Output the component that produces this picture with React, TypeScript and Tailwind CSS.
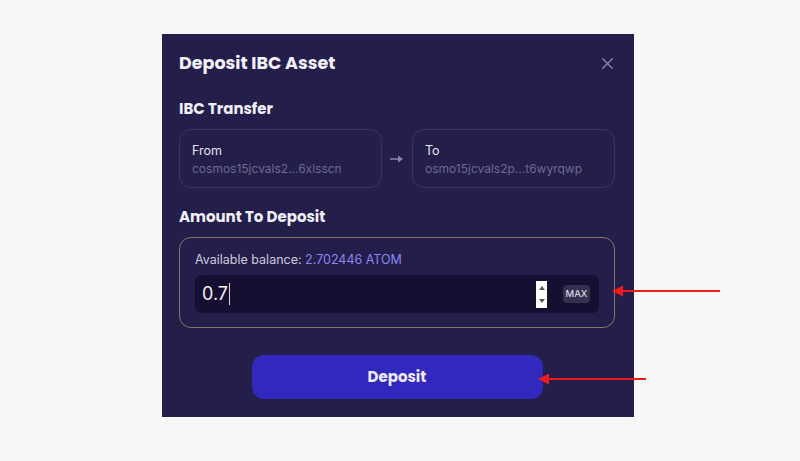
import { X } from 'lucide-react'

function AddressCard({ label, address }: { label: string; address: string }) {
  return (
    <div className="flex h-[59px] w-[203px] flex-col rounded-[12px] border border-[#39335f] pl-[12px] pt-[12px]">
      <span className="text-[12.5px] leading-[18px] text-[#e6e4f0]">{label}</span>
      <span className="text-[12px] leading-[18px] text-[#6f6a91]">{address}</span>
    </div>
  )
}

function RedArrow({ width }: { width: number }) {
  return (
    <svg width={width} height="14" viewBox={`0 0 ${width} 14`} aria-hidden="true">
      <line x1="10" y1="7" x2={width} y2="7" stroke="#f01c1c" strokeWidth="2" />
      <polygon points="0,7 11,1.5 11,12.5" fill="#f01c1c" />
    </svg>
  )
}

export default function App() {
  return (
    <div
      className="relative h-[461px] w-[800px] bg-[#f6f7f9] pl-[162px] pt-[34px]"
      style={{ fontFamily: 'Inter, "Noto Sans", sans-serif' }}
    >
      <div className="flex h-[383px] w-[472px] flex-col bg-[#231e4a] pl-[17px] pr-[19px] pt-[15px]">
        {/* Header */}
        <div className="flex h-[28px] items-center justify-between">
          <h2
            className="text-[17.5px] font-bold leading-[28px] text-[#f1f0f6]"
            style={{ fontFamily: 'Poppins, Lato, Inter, sans-serif' }}
          >
            Deposit IBC Asset
          </h2>
          <X className="-mr-[2px] h-[19px] w-[19px] text-[#8f8aab]" strokeWidth={1.5} />
        </div>

        <h3
          className="mt-[20px] text-[15px] font-bold leading-[24px] text-[#efeef5]"
          style={{ fontFamily: 'Poppins, Lato, Inter, sans-serif' }}
        >
          IBC Transfer
        </h3>

        <div className="mt-[8px] flex items-center justify-between">
          <AddressCard label="From" address="cosmos15jcvals2...6xlsscn" />
          <svg width="14" height="10" viewBox="0 0 14 10" aria-hidden="true">
            <line x1="0" y1="5" x2="9" y2="5" stroke="#8c84b4" strokeWidth="1.5" />
            <polygon points="8,1.5 13,5 8,8.5" fill="#8c84b4" />
          </svg>
          <AddressCard label="To" address="osmo15jcvals2p...t6wyrqwp" />
        </div>

        <h3
          className="mt-[17px] text-[15px] font-bold leading-[24px] text-[#efeef5]"
          style={{ fontFamily: 'Poppins, Lato, Inter, sans-serif' }}
        >
          Amount To Deposit
        </h3>

        {/* Amount box */}
        <div className="mt-[8px] flex h-[91px] flex-col rounded-[12px] border border-[#8c7763] px-[15px] pt-[13px]">
          <div className="text-[12.5px] leading-[18px] text-[#cdcadb]">
            Available balance: <span className="text-[#8d85f2]">2.702446 ATOM</span>
          </div>
          <div className="mt-[6px] flex h-[38px] items-center rounded-[7px] bg-[#170f31] pl-[7px] pr-[10px]">
            <span className="text-[18px] leading-[24px] text-[#f1f0f6]">0.7</span>
            <span className="ml-[1px] h-[22px] w-[1px] bg-[#d8d6e4]" />
            <div className="ml-auto flex h-[27px] w-[11px] flex-col items-center justify-between bg-white py-[5px]">
              <span className="h-0 w-0 border-x-[3px] border-b-[4px] border-x-transparent border-b-[#555]" />
              <span className="h-0 w-0 border-x-[3px] border-t-[4px] border-x-transparent border-t-[#555]" />
            </div>
            <span className="ml-[16px] mr-[-1px] flex h-[18px] w-[27px] items-center justify-center rounded-[4px] bg-[#35304f] text-[9.5px] font-medium text-[#d9d7e6]">
              MAX
            </span>
          </div>
        </div>

        <button
          className="mx-auto mt-[27px] flex h-[44px] w-[291px] items-center justify-center rounded-[12px] bg-[#3129bd] text-[15px] font-bold text-[#eceaf8]"
          style={{ fontFamily: 'Poppins, Lato, Inter, sans-serif' }}
        >
          Deposit
        </button>
      </div>

      {/* Annotation arrows */}
      <div className="absolute left-[612px] top-[284px]">
        <RedArrow width={108} />
      </div>
      <div className="absolute left-[538px] top-[372px]">
        <RedArrow width={108} />
      </div>
    </div>
  )
}
